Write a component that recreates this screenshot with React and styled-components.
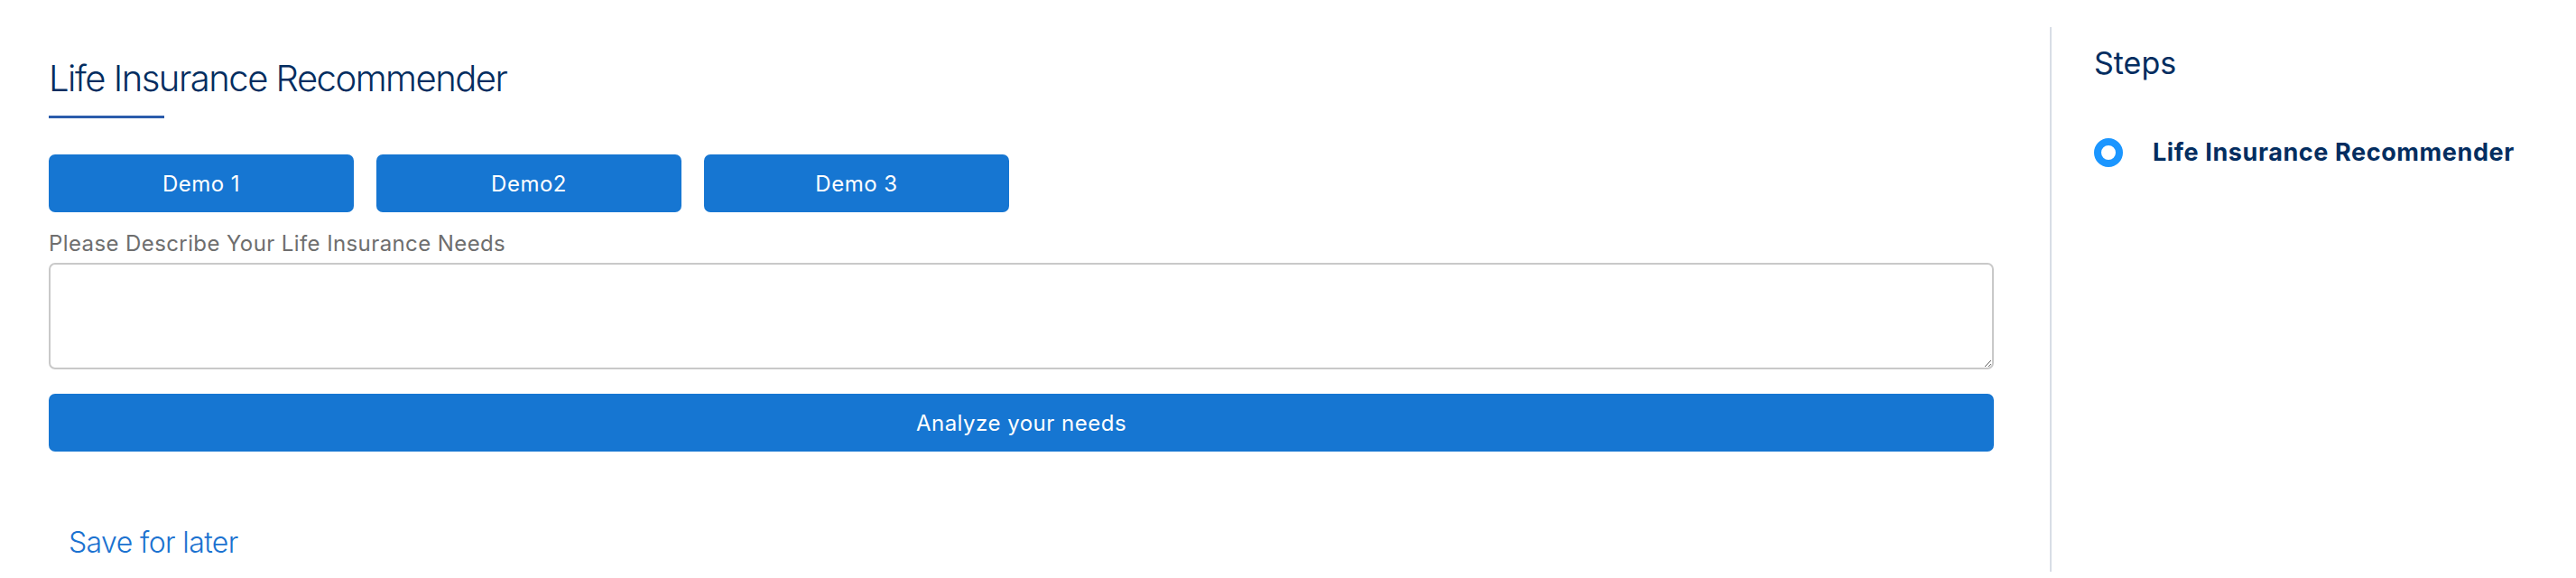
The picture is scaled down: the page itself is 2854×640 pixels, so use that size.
import React from "react";
import styled, { createGlobalStyle } from "styled-components";

const Global = createGlobalStyle`
  html, body { margin: 0; padding: 0; background: #ffffff; }
  body { font-family: Inter, "Noto Sans", sans-serif; }
  * { box-sizing: border-box; }
`;

const Page = styled.div`
  display: flex;
  min-height: 640px;
  width: 2854px;
`;

const Main = styled.main`
  flex: 1;
  display: flex;
  flex-direction: column;
  padding: 63px 62px 0 54px;
`;

const Title = styled.h1`
  margin: 0;
  font-size: 40px;
  line-height: 48px;
  font-weight: 300;
  color: #032d60;
  letter-spacing: -1.5px;
`;

const TitleRule = styled.div`
  width: 128px;
  height: 3px;
  margin-top: 17px;
  background: #2b5cab;
`;

const DemoRow = styled.div`
  display: flex;
  gap: 25px;
  margin-top: 40px;
`;

const BrandButton = styled.button`
  height: 64px;
  width: ${(p) => (p.$full ? "100%" : "338px")};
  border: none;
  border-radius: 7px;
  background: #1676d2;
  color: #ffffff;
  font-family: Inter, "Noto Sans", sans-serif;
  font-size: 24px;
  font-weight: 400;
  letter-spacing: 0.5px;
  cursor: pointer;
  padding: 0;
`;

const Label = styled.label`
  display: block;
  margin-top: 20px;
  font-size: 24px;
  line-height: 30px;
  letter-spacing: 0.4px;
  color: #6e6e6e;
`;

const TextArea = styled.textarea`
  display: block;
  width: 100%;
  height: 118px;
  margin-top: 6px;
  border: 2px solid #c9c9c9;
  border-radius: 7px;
  resize: vertical;
  font-family: Inter, "Noto Sans", sans-serif;
  font-size: 23px;
  padding: 10px 16px;
  background: #ffffff;
`;

const AnalyzeWrap = styled.div`
  margin-top: 27px;
`;

const LinkButton = styled.button`
  align-self: flex-start;
  margin-top: 81px;
  padding: 0 22px;
  border: none;
  background: transparent;
  font-family: Inter, "Noto Sans", sans-serif;
  font-size: 32px;
  line-height: 40px;
  font-weight: 300;
  letter-spacing: -0.6px;
  color: #1b72d0;
  cursor: pointer;
`;

const Sidebar = styled.aside`
  width: 583px;
  margin: 30px 0 7px;
  border-left: 2px solid #d8dde6;
  padding: 20px 0 0 47px;
`;

const SideTitle = styled.h2`
  margin: 0;
  font-size: 34px;
  line-height: 40px;
  font-weight: 400;
  color: #032d60;
`;

const StepList = styled.ul`
  list-style: none;
  margin: 62px 0 0;
  padding: 0;
`;

const Step = styled.li`
  display: flex;
  align-items: center;
  gap: 33px;
`;

const StepDot = styled.span`
  flex: none;
  width: 32px;
  height: 32px;
  border-radius: 50%;
  border: 8px solid #1b96ff;
  background: #ffffff;
`;

const StepLabel = styled.span`
  font-size: 27px;
  line-height: 34px;
  font-weight: 700;
  letter-spacing: 0.6px;
  color: #032d60;
`;

export default function App() {
  return (
    <>
      <Global />
      <Page>
        <Main>
          <Title>Life Insurance Recommender</Title>
          <TitleRule />
          <DemoRow>
            <BrandButton>Demo 1</BrandButton>
            <BrandButton>Demo2</BrandButton>
            <BrandButton>Demo 3</BrandButton>
          </DemoRow>
          <Label htmlFor="needs">Please Describe Your Life Insurance Needs</Label>
          <TextArea id="needs" />
          <AnalyzeWrap>
            <BrandButton $full>Analyze your needs</BrandButton>
          </AnalyzeWrap>
          <LinkButton>Save for later</LinkButton>
        </Main>
        <Sidebar>
          <SideTitle>Steps</SideTitle>
          <StepList>
            <Step>
              <StepDot />
              <StepLabel>Life Insurance Recommender</StepLabel>
            </Step>
          </StepList>
        </Sidebar>
      </Page>
    </>
  );
}
